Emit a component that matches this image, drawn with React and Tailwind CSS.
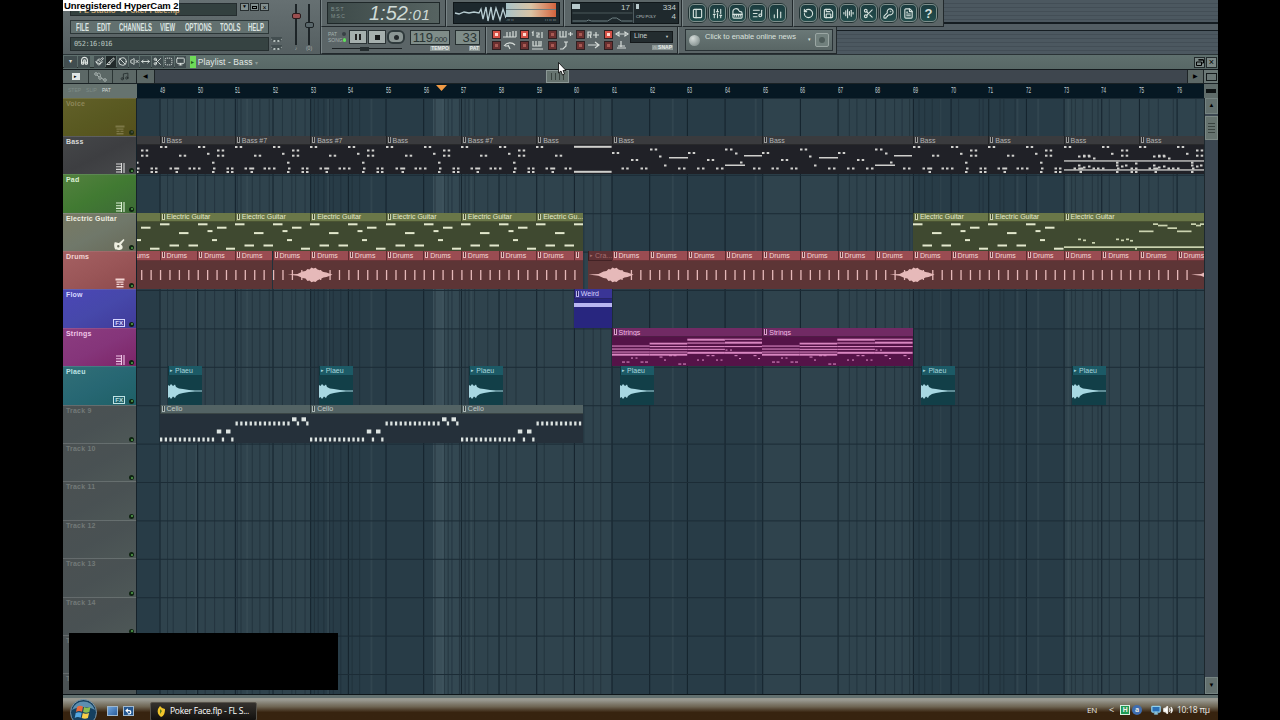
import {
    RotateCcw, Save, AudioLines, Scissors, KeyRound, FileText, SlidersVertical,
    Piano, ListMusic, ChartNoAxesColumn, PanelLeft, Paintbrush, Magnet, Ban,
    VolumeX, MoveHorizontal, Slice, SquareDashed, Monitor, Volume2, Music, Undo2,
} from 'lucide-react';

const BAR = 37.67;
const FIRST = 22.5; // x of bar 49 inside the lanes
const at = (bar) => FIRST + (bar - 49) * BAR;

// Text squeezed horizontally, for the narrow LCD-like captions
const Narrow = ({ w, className = '', children }) => (
    <span className={`block shrink-0 whitespace-nowrap ${className}`} style={{ width: w }}>
        <span className="inline-block origin-left scale-x-[0.54]">{children}</span>
    </span>
);

/* ---------- note data: [x, y, width] inside a clip body ---------- */

const BASS_A = [
    [0, 0.5], [4.7, 0.5], [19, 9.2], [23.7, 9.2], [9.5, 22], [14.2, 22, 5], [15.5, 25.5],
    [28.5, 22], [33, 22], [38, 22],
];
const BASS = [
    ...BASS_A, [38, 0.5], [42.7, 0.5], [57, 4], [61.7, 4], [47, 7.3], [57, 9.2], [61.7, 9.2],
    [52, 16.2], [53, 22], [52, 25.5], [66.5, 22], [71, 22], [66.5, 25.5], [71, 25.5],
];
const BASS_END = [...BASS_A.slice(0, -1), [38, 0.3, 37.6], [38, 25.3, 37.6]];
const BASS_LONG = [
    [0, 6.5], [4.7, 6.5], [19, 13.5], [23.7, 13.5], [9.5, 22], [14.2, 22], [28.5, 22], [33, 22],
    [38, 3], [42.7, 3], [47, 10], [57, 11.5, 19, 1.5], [52, 19], [66, 22], [71, 22],
    [76, 6.5], [80.7, 6.5], [95, 13.5], [99.7, 13.5], [85, 22], [90, 22], [104, 22], [109, 22],
    [113, 3], [118, 3], [123, 7], [132, 9.5, 18, 1.5], [128, 16], [113, 19, 20, 1.5], [141, 22], [146, 22],
];
const BASS_BUSY = [
    ...BASS, [0, 14.8, 75.4, 1.3], [0, 23.8, 75.4, 1.3], [14, 10], [19, 10], [24, 10], [29, 12],
    [14, 19], [19, 21], [24, 20], [52, 19], [57, 20], [61, 19], [71, 17],
];

const GUITAR = [
    [0, 0.8, 9.5], [38, 0.8, 9.5], [57, 4.2, 9.5], [47.5, 7.6, 5], [19, 9.6, 9.5], [52, 16.6, 5],
    [9.5, 22, 9.5], [28.5, 22, 9.5], [66, 25.2, 9.5],
];
const GUITAR_END = [
    [0, 23.8, 141], [14, 16, 3], [19, 17, 3], [28, 19.5, 3], [52, 16, 3], [57, 17, 3], [62, 16, 3],
    [66, 17.4, 3], [71, 25.5, 2], [75, 8, 14.5], [89, 0.8, 5], [94, 2.2, 9.5], [103.5, 4.8, 9.5],
    [113, 8, 14.5], [127, 0.8, 5], [132, 2.2, 5], [136, 0.8, 5],
];

const steps = (from, count) => Array.from({ length: count }, (_, i) => from + i * 4.71);
const CELLO = [
    ...steps(0, 12).map((x) => [x, 23, 2.3]),
    ...steps(75.5, 12).map((x) => [x, 7, 2.3]),
    [56.8, 15, 4.5], [66, 15, 4.5], [61.8, 23, 2.3], [71.2, 23, 2.3],
    [132, 2.8, 4.5], [141.5, 2.8, 4.5], [136.8, 7, 2.3], [146.2, 7, 2.3],
];

const STRINGS = [
    [0, 8, 37.6], [0, 11, 37.6], [0, 14, 37.6], [0, 16.2, 37.6, 2],
    [37.6, 5.2, 37.6, 1.8], [37.6, 8.5, 37.6], [37.6, 11.3, 37.6], [37.6, 14, 37.6], [37.6, 16.2, 37.6, 2],
    [75.3, 1.2, 37.6, 2], [75.3, 5, 37.6], [75.3, 8.5, 37.6], [75.3, 11.3, 37.6], [75.3, 14.3, 37.6, 2],
    [113, 1.2, 37.6], [113, 4.2, 37.6, 2], [113, 8.5, 37.6], [113, 14.3, 37.6, 2],
    [10, 24, 3], [14.5, 24, 3], [19, 20, 2], [23.5, 20, 2], [28.5, 24, 3], [33, 24, 3],
    [47.5, 19, 3], [52, 22, 2], [57, 17.6, 3], [61.5, 17.6, 3], [66.3, 26, 3], [71, 26, 3],
    [85, 22, 2], [90, 22, 2], [94.5, 17.6, 3], [99.5, 17.6, 3], [104, 22, 2], [108.5, 22, 2],
    [113.5, 12, 2], [118, 12, 2], [122.5, 17.6, 3], [127, 20.5, 2], [141.5, 17.6, 3], [146, 20.5, 2],
];

const Notes = ({ list, h = 2, className = 'fill-[#d0d0cd]' }) => (
    <svg className={`block h-full w-full ${className}`}>
        {list.map(([x, y, w = 2.5, nh = h], i) => (
            <rect key={i} x={x} y={y + 0.5} width={w} height={nh} />
        ))}
    </svg>
);

/* ---------- clips ---------- */

const STYLES = {
    bass: { head: 'bg-[#3a3b3e] text-[#b4b4b2]', body: 'bg-[#202127]' },
    guitar: { head: 'bg-[#6a7748] text-[#e6ebcb]', body: 'bg-[#3f4930]' },
    drums: { head: 'bg-[#9a4c52] text-[#f4d6d5]', body: 'bg-[#5d3536]' },
    crash: { head: 'bg-[#5f3135] text-[#a56f70]', body: 'bg-[#5d3536]' },
    weird: { head: 'bg-[#3a3596] text-[#d8d4ff]', body: 'bg-[#28267f]' },
    strings: { head: 'bg-[#712a64] text-[#f3bde4]', body: 'bg-[#551348]' },
    plaeu: { head: 'bg-[#1c5a66] text-[#a8d6dc]', body: 'bg-[#123f48]' },
    cello: { head: 'bg-[#536364] text-[#c0cac7]', body: 'bg-[#25303a]' },
};

const Clip = ({ kind, from, width, name, audio, children }) => {
    const s = STYLES[kind];
    return (
        <div className="absolute top-0 bottom-0 flex flex-col overflow-hidden" style={{ left: from, width }}>
            <div className={`flex h-[9.5px] shrink-0 items-center gap-[2px] overflow-hidden border-b border-l border-black/40 border-b-black/30 pl-px text-[7px] leading-[9px] ${s.head}`}>
                {audio ? (
                    <span className="text-[5px]">▸</span>
                ) : (
                    <span className="h-[6px] w-[3px] shrink-0 border border-t-0 border-current bg-black/50 opacity-80" />
                )}
                <span className="whitespace-nowrap">{name}</span>
            </div>
            <div className={`min-h-0 flex-1 ${s.body}`}>{children}</div>
        </div>
    );
};

const Lane = ({ children }) => <div className="relative h-full min-w-0 flex-1 overflow-hidden">{children}</div>;

const BASS_CLIPS = [
    [47, 2, '', BASS], [49, 2, 'Bass', BASS], [51, 2, 'Bass #7', BASS], [53, 2, 'Bass #7', BASS],
    [55, 2, 'Bass', BASS], [57, 2, 'Bass #7', BASS], [59, 2, 'Bass', BASS_END], [61, 4, 'Bass', BASS_LONG],
    [65, 4, 'Bass', BASS_LONG], [69, 2, 'Bass', BASS], [71, 2, 'Bass', BASS], [73, 2, 'Bass', BASS_BUSY],
    [75, 2, 'Bass', BASS_BUSY],
];

const BassLane = () => (
    <Lane>
        {BASS_CLIPS.map(([b, bars, name, list]) => (
            <Clip key={b} kind="bass" from={at(b)} width={BAR * bars} name={name}><Notes list={list} /></Clip>
        ))}
    </Lane>
);

const GuitarLane = () => (
    <Lane>
        {[47, 49, 51, 53, 55, 57, 59, 69, 71].map((b) => (
            <Clip key={b} kind="guitar" from={at(b)} width={b === 59 ? 47 : BAR * 2} name={b === 47 ? '' : b === 59 ? 'Electric Gu...' : 'Electric Guitar'}>
                <Notes list={GUITAR} className="fill-[#e3e8cd]" />
            </Clip>
        ))}
        <Clip kind="guitar" from={at(73)} width={BAR * 4} name="Electric Guitar">
            <Notes list={GUITAR_END} h={1.7} className="fill-[#cbd3b0]" />
        </Clip>
    </Lane>
);

const Swell = ({ x }) => (
    <path
        transform={`translate(${x} 0)`}
        d="M-25 23.4 L-15 23 L-10 20.5 L-7 20 L-5 18 L-3 18.5 L-1 16.5 L1 17.5 L3 16.8 L5 18.5 L8 19.5 L11 21 L14 21.5 L18 23 L20 23.4 L18 24.6 L14 26 L11 26.6 L8 28 L5 29.3 L3 31 L1 30.4 L-1 31.2 L-3 29.5 L-5 30 L-7 27.6 L-10 27 L-15 24.8 Z"
    />
);

const DrumsLane = () => {
    const ticks = Array.from({ length: 114 }, (_, i) => at(48) + 1 + i * (BAR / 4));
    return (
        <Lane>
            {Array.from({ length: 29 }, (_, i) => 48 + i).map((b) => (
                <Clip key={b} kind="drums" from={at(b)} width={b === 60 ? 9 : BAR} name={b === 60 ? '' : 'Drums'} />
            ))}
            <Clip kind="crash" from={451} width={23.5} name="Cra..." audio />
            <svg className="absolute inset-0 h-full w-full fill-[#e6b9b9]">
                {ticks.filter((x) => x < 446 || x > 474).map((x) => (
                    <rect key={x} x={x - 0.6} y="19" width="1.3" height="10" />
                ))}
                <Swell x={175.5} />
                <Swell x={476.5} />
                <Swell x={777.5} />
                <Swell x={1079} />
            </svg>
        </Lane>
    );
};

const FlowLane = () => (
    <Lane>
        <Clip kind="weird" from={at(60)} width={BAR} name="Weird">
            <div className="pt-[4px]"><div className="h-[4px] bg-[#b9b6f2]" /></div>
        </Clip>
    </Lane>
);

const StringsLane = () => (
    <Lane>
        {[61, 65].map((b) => (
            <Clip key={b} kind="strings" from={at(b)} width={BAR * 4} name="Strings">
                <Notes list={STRINGS} h={1.1} className="fill-[#d886c0]" />
            </Clip>
        ))}
    </Lane>
);

const PlaeuLane = () => (
    <Lane>
        {[49, 53, 57, 61, 69, 73].map((b) => (
            <Clip key={b} kind="plaeu" from={at(b) + 8.5} width={34} name="Plaeu" audio>
                <svg className="block h-full w-full fill-[#a8d8e2]">
                    <path d="M0 9 L1.5 10 L3 8 L5 10 L7 8.5 L8 11 L11 12.5 L15 13 L21 14 L27 14.4 L34 14.6 L34 15.4 L27 15.6 L21 16 L15 17 L11 18 L8 20 L7 22 L5 20.5 L3 23 L1.5 21 L0 22 Z" />
                </svg>
            </Clip>
        ))}
    </Lane>
);

const CelloLane = () => (
    <Lane>
        {[49, 53, 57].map((b) => (
            <Clip key={b} kind="cello" from={at(b)} width={b === 57 ? 122 : BAR * 4} name="Cello">
                <Notes list={CELLO} h={4} className="fill-[#dde4e2]" />
            </Clip>
        ))}
    </Lane>
);

/* ---------- tracks ---------- */

const KeysIcon = () => (
    <svg className="h-[10px] w-[10px] fill-none stroke-current" viewBox="0 0 10 10">
        <path d="M1 1h5M1 3.7h5M1 6.4h5M1 9h5M6.5 0v10M9 0v10" strokeWidth="1.1" />
    </svg>
);
const GuitarIcon = () => (
    <svg className="h-[11px] w-[11px] fill-current" viewBox="0 0 11 11">
        <path fillRule="evenodd" d="M0.500 3.500 C2 2.500 4 4 5 4 L9.500 0 L10.500 1 L7 5.500 C9 7 9 8.500 8 10 C6 11.500 2 11 1 10 C0 8 0 6 0.500 3.500Z M4.300 6a1.200 1.200 0 100 2.400 1.200 1.200 0 000-2.400Z" />
    </svg>
);
const DrumIcon = () => (
    <svg className="h-[10px] w-[10px] fill-current" viewBox="0 0 10 10">
        <path d="M0.500 0.500h9v2h-9zM1.500 3.500h7v1.200h-7zM1.500 5.700h3v1.200h-3zM5.500 5.700h3v1.200h-3zM1.500 8h7v1.500h-7z" />
    </svg>
);
const FxIcon = () => (
    <span className="border border-current px-px text-[6px] leading-[6px] font-bold">FX</span>
);

const TRACKS = [
    { name: 'Voice', bg: 'bg-linear-to-br from-[#626029] via-[#595921] to-[#55501c]', text: 'text-[#8d8759]', icon: <DrumIcon />, off: true },
    { name: 'Bass', bg: 'bg-linear-to-br from-[#454749] via-[#3d3e41] to-[#47494b]', text: 'text-[#d8d8d8]', icon: <KeysIcon />, lane: <BassLane /> },
    { name: 'Pad', bg: 'bg-linear-to-br from-[#53813f] via-[#417a32] to-[#3d6a36]', text: 'text-[#dcf0d4]', icon: <KeysIcon /> },
    { name: 'Electric Guitar', bg: 'bg-linear-to-br from-[#797a63] via-[#70786a] to-[#686a58]', text: 'text-[#eeeee0]', icon: <GuitarIcon />, lane: <GuitarLane /> },
    { name: 'Drums', bg: 'bg-linear-to-br from-[#a56062] via-[#9a5658] to-[#8d4a4c]', text: 'text-[#f3d5d4]', icon: <DrumIcon />, lane: <DrumsLane /> },
    { name: 'Flow', bg: 'bg-linear-to-br from-[#4b46b6] via-[#4648aa] to-[#403b99]', text: 'text-[#d6d6ff]', icon: <FxIcon />, lane: <FlowLane /> },
    { name: 'Strings', bg: 'bg-linear-to-br from-[#8c3c80] via-[#85357a] to-[#7c2467]', text: 'text-[#f1c6e8]', icon: <KeysIcon />, lane: <StringsLane /> },
    { name: 'Plaeu', bg: 'bg-linear-to-br from-[#316f77] via-[#276773] to-[#1e6066]', text: 'text-[#bde2e4]', icon: <FxIcon />, lane: <PlaeuLane /> },
    { name: 'Track 9', lane: <CelloLane /> },
    ...[10, 11, 12, 13, 14, 15, 16].map((n) => ({ name: `Track ${n}` })),
];

const Track = ({ name, bg, text, icon, lane, off }) => (
    <div className="flex h-[38.4px] shrink-0">
        <div className={`flex w-[74px] shrink-0 flex-col justify-between border-t border-r border-t-white/15 border-r-[#16222a] pt-px pr-[2px] pb-px pl-[3px] ${bg || 'bg-linear-to-br from-[#4b5152] via-[#495153] to-[#4e5857]'} ${text || 'text-[#727978]'}`}>
            <span className="text-[7px] leading-[8px] font-bold tracking-[0.2px] whitespace-nowrap">{name}</span>
            <div className={`flex items-end justify-end gap-[4px] ${off ? 'opacity-70' : ''}`}>
                {icon}
                <span className="flex h-[5px] w-[5px] items-center justify-center rounded-full bg-[#0e2411]">
                    <span className={`h-[2px] w-[2px] rounded-full ${off ? 'bg-[#3c4b5c]' : 'bg-[#56a24c]'}`} />
                </span>
            </div>
        </div>
        {lane}
    </div>
);

// Fine lines that sit between the bars
const FINE = [
    49.2, 49.35, 49.7, 50.2, 50.45, 50.7, 51.05, 51.15, 51.45, 51.65, 51.9, 52.25, 52.5, 52.6, 52.85, 53.1, 53.2,
    53.35, 53.5, 53.6, 53.8, 54.1, 54.3, 56.3, 56.55, 56.65, 56.75, 56.95, 57.1, 57.2, 57.35, 57.7, 58.2, 58.45,
    59.2, 59.7, 60.25, 60.5, 60.7, 67.3, 67.5, 67.75, 68.25, 68.5, 68.7, 68.9, 69.15, 69.3, 69.5, 69.7, 70.2,
    70.75, 70.85, 71.3, 71.4, 71.7, 73.2, 73.3, 73.5, 73.75, 73.9, 74.2, 74.5, 75.25, 75.5, 75.9, 76.5,
];
const GLOW = [49.95, 51.3, 53.45, 54.6, 56.5, 57.25, 62.6, 64.8, 69.7, 71.75, 72.3, 73.1];

const Grid = () => (
    <svg className="absolute top-0 right-0 h-full w-[1067px]">
        <rect width="1067" height="597" className="fill-[#283c47]" />
        {[49, 57, 65, 73].map((b) => (
            <rect key={b} x={at(b)} width={BAR * 4} height="597" className="fill-[#2f434d]" />
        ))}
        <rect x="296" width="28" height="597" className="fill-[#334852]" />
        <rect x="296" width="12" height="597" className="fill-[#3a4f59]" />
        {FINE.map((b) => <rect key={b} x={at(b)} width="1" height="597" className="fill-[#1d2c36]/60" />)}
        {GLOW.map((b) => <rect key={b} x={at(b)} width="2" height="597" className="fill-[#4d6068]/25" />)}
        {Array.from({ length: 28 }, (_, i) => 49 + i).map((b) => (
            <rect key={b} x={at(b)} width="1" height="597" className="fill-[#14222c]" />
        ))}
        {Array.from({ length: 16 }, (_, i) => i * 38.4).map((y) => (
            <rect key={y} y={y} width="1067" height="1" className="fill-[#1c2c36]" />
        ))}
    </svg>
);

/* ---------- top toolbar ---------- */

const RoundButton = ({ children }) => (
    <span className="flex h-[20px] w-[19px] items-center justify-center rounded-[6px] border-2 border-[#7f908d] bg-linear-to-b from-[#1c3c3f] to-[#234d4c] text-[#d6e2de] outline outline-[#223334] outline-offset-[-1px]">
        {children}
    </span>
);

const ICON = { size: 11, strokeWidth: 2.4 };
const TOOLS_A = [PanelLeft, SlidersVertical, Piano, ListMusic, ChartNoAxesColumn];
const TOOLS_B = [RotateCcw, Save, AudioLines, Scissors, KeyRound, FileText];

const Led = ({ on }) => (
    <span className={`flex h-[9px] w-[9px] items-center justify-center border border-[#2e2022] ${on ? 'bg-[#d55147]' : 'bg-[#6c3030]'}`}>
        <span className={`h-[3px] w-[3px] ${on ? 'bg-[#ffd9cf]' : 'bg-[#a85a54]'}`} />
    </span>
);

const Glyph = ({ d }) => (
    <svg className="h-[9px] w-[14px] fill-none stroke-[#d6dcd9]" viewBox="0 0 14 9"><path d={d} strokeWidth="1.2" /></svg>
);

const SWITCHES = [
    [true, 'M0 7h13M4 2v5M7 2v5M10 1v6M13 1v6'], [true, 'M1 3l1-1v4M5 3h3v2H6v2h3M11 2v6'],
    [false, 'M1 1v6h6V1M4 1v6M9 4h5M11.5 2v4'], [false, 'M1 8V2h3v3H1M4 8L3 5M6 5h6M9 2v6'], [true, 'M1 4l3-2v4zM13 4l-3-2v4zM5 4h4'],
    [false, 'M1 5c3-4 8-4 11-1M5 4l2 4M2 5h4'], [false, 'M2 0v5h8V0M5 0v5M8 0v5M1 8h11'],
    [false, 'M1 8h3l3-3V1M5 1h4'], [false, 'M1 4h10M8 1l4 3-4 3'], [false, 'M6 0v6M2 7h9M3 5h7'],
];

const Caption = ({ children }) => <span className="self-end bg-[#8b9694] px-px text-[5px] leading-[5px] font-bold text-[#e5e9e7]">{children}</span>;

const MENU = [['FILE', 21], ['EDIT', 22], ['CHANNELS', 41], ['VIEW', 25], ['OPTIONS', 35], ['TOOLS', 28], ['HELP', 17]];

const WIN_BUTTON = 'flex h-[8px] w-[9px] items-center justify-center border border-[#262d2f] bg-[#839090] text-black';

const MainPanel = () => (
    <div className="flex w-[258px] shrink-0 border-r border-[#272f32] bg-linear-to-b from-[#667072] to-[#555f61]">
        <div className="flex w-[208px] flex-col pl-[7px]">
            <div className="flex h-[19px] items-start gap-[3px] pt-[3px]">
                <div className="flex h-[13px] w-[167px] items-end overflow-hidden border border-[#252d2f] bg-[#33403f] pl-[8px] text-[8px] leading-[9px] font-bold whitespace-nowrap text-[#c6a574]">
                    FL Studio&nbsp;&nbsp;- Poker Face.flp
                </div>
                <div className="flex gap-px">
                    <span className={`${WIN_BUTTON} text-[5px]`}>▼</span>
                    <span className={WIN_BUTTON}><i className="h-[3px] w-[5px] border border-black" /></span>
                    <span className={`${WIN_BUTTON} text-[7px] leading-none`}>×</span>
                </div>
            </div>
            <div className="mt-[1px] flex h-[14px] w-[199px] shrink-0 items-center border border-[#2d3738] bg-[#62706f] pl-[5px] text-[11px] leading-[12px] font-bold text-[#dbe4e1]">
                {MENU.map(([label, w]) => <Narrow key={label} w={w}>{label}</Narrow>)}
            </div>
            <div className="mt-[3px] flex h-[14px] w-[199px] shrink-0 items-center border border-[#262f30] bg-[#364342] pl-[3px] font-['DejaVu_Sans_Mono','Liberation_Mono',monospace] text-[7px] tracking-[-0.4px] text-[#b6c3bf]">
                052:16:016
            </div>
        </div>
        <div className="flex w-[14px] flex-col justify-end gap-[3px] pb-[4px]">
            <span className="h-[5px] w-[11px] rounded-b border-b-2 border-dotted border-[#b8c2bf] bg-[#434e50]" />
            <span className="h-[5px] w-[11px] rounded-b border-b-2 border-dotted border-[#b8c2bf] bg-[#434e50]" />
        </div>
        <div className="flex flex-1 justify-center gap-[3px] pt-[4px]">
            <div className="flex w-[10px] flex-col items-center">
                <span className="h-[9px] w-[2px] bg-[#1d2427]" />
                <span className="h-[6px] w-[9px] rounded-xs border border-[#2a1a1c] bg-[#9c4f50]" />
                <span className="h-[26px] w-[2px] bg-[#1d2427]" />
                <span className="text-[5px] leading-[6px] text-[#aab3b0]">♪</span>
            </div>
            <div className="flex w-[10px] flex-col items-center">
                <span className="h-[18px] w-[2px] bg-[#1d2427]" />
                <span className="h-[6px] w-[9px] rounded-xs border border-[#1c2224] bg-[#59666a]" />
                <span className="h-[17px] w-[2px] bg-[#1d2427]" />
                <span className="text-[5px] leading-[6px] text-[#aab3b0]">(0)</span>
            </div>
        </div>
    </div>
);

const PANEL = 'flex items-center border-r border-b border-r-[#22292c] border-b-[#22292c] border-l border-l-[#7a8587] bg-[#5b6567]';
const STRIPES = 'flex-1 bg-[repeating-linear-gradient(to_bottom,#4c5860_0px,#4c5860_3px,#434e56_3px,#434e56_4px)]';

const Toolbar = () => (
    <div className="flex h-[55px] shrink-0 border-b border-[#2a3336] bg-[#535e64]">
        <MainPanel />
        <div className="flex min-w-0 flex-1 flex-col">
            <div className="flex h-[27px]">
                <div className={`${PANEL} w-[125px] pl-[5px]`}>
                    <div className="flex h-[22px] w-[113px] items-center border border-[#1f2829] bg-linear-to-r from-[#3d4a49] to-[#566361]">
                        <span className="ml-[3px] w-[38px] text-[5px] leading-[7px] text-[#849390]">B:S:T<br />M:S:C</span>
                        <span className="flex items-baseline text-[#cfdad6] italic">
                            <span className="text-[20px] leading-none">1:52</span>
                            <span className="text-[15px] leading-none tracking-[0.5px]">:01</span>
                        </span>
                    </div>
                </div>
                <div className={`${PANEL} w-[118px] pl-[6px]`}>
                    <div className="flex h-[22px] w-[107px] items-start border border-[#0f1619] bg-[#1d282d]">
                        <svg className="h-[20px] w-[52px] shrink-0 fill-none stroke-[#b8cdd2]" viewBox="0 0 52 20">
                            <path d="M1 10l4 1 5-2 5 1 5-1 5 1 2-4 2 10 3-12 2 14 3-14 2 13 3-12 4 12 3-11 3 9" strokeWidth="1.3" />
                        </svg>
                        <div className="flex w-[50px] flex-col">
                            <span className="h-[7px] border-b border-[#6d7d80] bg-linear-to-r from-[#a8c3c8] via-[#d9c3a4] to-[#d3623c]" />
                            <span className="h-[7px] bg-linear-to-r from-[#a8c3c8] via-[#d9c3a4] to-[#d3623c]" />
                            <span className="flex justify-between text-[4px] leading-[5px] text-[#8fa0a2]"><span>-∞ ıı</span><span>ı ı ıı ııı</span></span>
                        </div>
                    </div>
                </div>
                <div className={`${PANEL} w-[118px] pl-[6px]`}>
                    <div className="flex h-[22px] w-[108px] border border-[#10171a] bg-[#1f292d] text-[8px] leading-[9px] text-[#c6d0cd]">
                        <div className="flex w-[62px] flex-col border-r border-[#4f5c60]">
                            <div className="flex items-start justify-between pr-[3px]"><i className="mt-[1px] h-[5px] w-[8px] bg-[#b8c9cc]" /><span>17</span></div>
                            <svg className="h-[11px] w-full fill-none stroke-[#6f8184]" viewBox="0 0 60 11"><path d="M0 9h14l2-1 3 1 16 0 5-3 4 0 5 3h11" /><path d="M0 1h60" className="stroke-[#4b585b]" /></svg>
                        </div>
                        <div className="flex flex-1 flex-col px-[2px]">
                            <div className="flex items-start justify-between"><i className="mt-[1px] h-[5px] w-[3px] bg-[#b8c9cc]" /><span>334</span></div>
                            <div className="flex items-end justify-between"><span className="text-[4px]">CPU POLY</span><span>4</span></div>
                        </div>
                    </div>
                </div>
                <div className={`${PANEL} w-[111px] justify-center gap-px`}>
                    {TOOLS_A.map((I, i) => <RoundButton key={i}><I {...ICON} /></RoundButton>)}
                </div>
                <div className={`${PANEL} w-[151px] justify-center gap-px`}>
                    {TOOLS_B.map((I, i) => <RoundButton key={i}><I {...ICON} /></RoundButton>)}
                    <RoundButton><span className="text-[13px] leading-none font-bold">?</span></RoundButton>
                </div>
                <div className={`${STRIPES} mb-[3px] border-b-2 border-[#151d22]`} />
            </div>
            <div className="flex h-[27px]">
                <div className={`${PANEL} w-[165px] gap-[5px] pl-[6px]`}>
                    <div className="flex flex-col gap-[2px]">
                        <div className="flex h-[15px] items-center">
                            <div className="flex w-[18px] flex-col text-[5px] leading-[6px] text-[#a7b2af]">
                                <span className="flex items-center justify-between">PAT<i className="h-[4px] w-[4px] rounded-full bg-[#384045]" /></span>
                                <span className="flex items-center justify-between">SONG<i className="h-[4px] w-[4px] rounded-full bg-[#5fe05b]" /></span>
                            </div>
                            <div className="ml-[3px] flex gap-px">
                                <span className="flex h-[14px] w-[18px] items-center justify-center gap-[2px] border border-[#2b3335] bg-[#a5afad]"><i className="h-[6px] w-[2px] bg-[#222]" /><i className="h-[6px] w-[2px] bg-[#222]" /></span>
                                <span className="flex h-[14px] w-[18px] items-center justify-center border border-[#2b3335] bg-[#a5afad]"><i className="h-[5px] w-[5px] bg-[#16191a]" /></span>
                                <span className="flex h-[14px] w-[18px] items-center justify-center rounded-md border-2 border-[#2f3a3c] bg-[#8b9694]"><i className="h-[5px] w-[5px] rounded-full bg-[#23292b]" /></span>
                            </div>
                        </div>
                        <div className="ml-[4px] flex w-[70px] items-center">
                            <i className="h-px w-[28px] bg-[#1c2224]" /><i className="h-[4px] w-[9px] bg-[#262e30]" /><i className="h-px flex-1 bg-[#1c2224]" />
                        </div>
                    </div>
                    <div className="flex flex-col gap-[1px]">
                        <div className="flex h-[15px] w-[40px] items-baseline justify-end border border-[#262f30] bg-[#7f8d89] pr-[2px] leading-[13px] text-[#2a3534]">
                            <span className="text-[13px] tracking-[-0.3px]">119</span><span className="text-[8px] tracking-[-0.3px]">.000</span>
                        </div>
                        <Caption>TEMPO</Caption>
                    </div>
                    <div className="flex flex-col gap-[1px]">
                        <div className="flex h-[15px] w-[25px] items-center justify-end border border-[#262f30] bg-[#7f8d89] pr-[2px] text-[13px] leading-none text-[#2a3534]">33</div>
                        <Caption>PAT</Caption>
                    </div>
                </div>
                <div className={`${PANEL} w-[192px] gap-px pl-[5px]`}>
                    <div className="grid grid-cols-5 gap-x-[3px] gap-y-[2px]">
                        {SWITCHES.map(([on, d], i) => (
                            <span key={i} className="flex items-center gap-[2px]"><Led on={on} /><Glyph d={d} /></span>
                        ))}
                    </div>
                    <div className="flex flex-col gap-[2px]">
                        <div className="flex h-[12px] w-[43px] items-center justify-between border border-[#14191b] bg-[#232c2f] px-[3px] text-[7px] text-[#c8d0ce]">Line<span className="text-[4px]">▼</span></div>
                        <Caption>∩ SNAP</Caption>
                    </div>
                </div>
                <div className={`${PANEL} w-[159px] pl-[6px]`}>
                    <div className="flex h-[22px] w-[148px] items-center border border-[#2a3336] bg-linear-to-b from-[#6a7877] to-[#596665] px-[3px] text-[7.5px] text-[#dbe2df]">
                        <span className="mr-[5px] h-[11px] w-[11px] rounded-full bg-radial-[at_35%_30%] from-[#d5dcda] to-[#6f7d7b]" />
                        <span className="mb-[6px] flex-1 whitespace-nowrap">Click to enable online news</span>
                        <span className="mr-[4px] text-[5px]">▾</span>
                        <span className="flex h-[14px] w-[14px] items-center justify-center rounded-xs border border-[#9aa6a3] bg-[#71807d]"><i className="h-[6px] w-[6px] rounded-full bg-[#4e5c5a]" /></span>
                    </div>
                </div>
                <div className={`${STRIPES} mt-[3px] border-t border-[#151d22]`} />
            </div>
        </div>
    </div>
);

/* ---------- playlist window ---------- */

const TITLE_ICONS = [Paintbrush, Slice, Ban, VolumeX, MoveHorizontal, Scissors, SquareDashed, Monitor];

const PlaylistTitle = () => (
    <div className="flex h-[14px] shrink-0 items-center bg-linear-to-b from-[#5f706e] to-[#586866]">
        <div className="flex h-[12px] items-center gap-px border-b border-[#29312f] pl-px text-[#e0e6e3]">
            <span className="flex h-[12px] w-[13px] items-center justify-center bg-[#414d4f] text-[6px]">▾</span>
            <span className="flex h-[12px] w-[12px] items-center justify-center bg-[#414d4f]"><Magnet size={9} strokeWidth={3} className="-rotate-45" /></span>
            <span className="w-[2px]" />
            {TITLE_ICONS.map((I, i) => (
                <span key={i} className={`flex h-[12px] w-[10.6px] items-center justify-center ${i === 1 ? 'bg-[#222a2b]' : 'bg-[#414d4f]'}`}><I size={9} strokeWidth={2.4} /></span>
            ))}
        </div>
        <span className="ml-[4px] flex h-[12px] w-[6px] items-center justify-center bg-[#6fdb58] text-[6px] text-[#1d5a18]">▸</span>
        <span className="ml-[2px] text-[8.5px] tracking-[0.1px] text-[#e2e8e5]">Playlist - Bass <span className="text-[6px] text-[#8d9a97]">▾</span></span>
        <span className="mr-[1px] ml-auto flex h-[11px] gap-px">
            <span className="flex w-[11px] items-center justify-center border border-[#222a2b] bg-[#7b8886]">
                <svg className="h-[7px] w-[8px] fill-none stroke-black" viewBox="0 0 8 7"><path d="M2.500 1h5v3h-1.500M.500 3h5v3.500h-5zM2.500 .7h5" /></svg>
            </span>
            <span className="flex w-[11px] items-center justify-center border border-[#222a2b] bg-[#7b8886] text-[9px] leading-none text-black">×</span>
        </span>
    </div>
);

const ScrollRow = () => (
    <div className="flex h-[15px] shrink-0 border-t border-b border-t-[#141a1d] border-b-[#1a2225] bg-[#3e464e]">
        <div className="flex w-[74px] shrink-0 border-r border-[#1d2426] bg-[#5c6866] text-[#d0d8d5]">
            <span className="flex w-[26px] items-center justify-center border-r border-[#2b3534]"><i className="flex h-[7px] w-[8px] items-center justify-center bg-[#e2e6e4] text-[5px] text-black not-italic">▸</i></span>
            <span className="flex w-[24px] items-center justify-center border-r border-[#2b3534]">
                <svg className="h-[10px] w-[13px] fill-none stroke-[#a9b3b0]" viewBox="0 0 13 10"><circle cx="2" cy="2" r="1.3" /><circle cx="6" cy="6" r="1.300" /><circle cx="11" cy="8" r="1.3" /><path d="M3 3l2 2M7.300 6.300L10 7.500M3.500 1.500c2-1 3 0 3 3" /></svg>
            </span>
            <span className="flex flex-1 items-center justify-center text-[#202829]"><Music size={9} /></span>
        </div>
        <span className="flex w-[18px] shrink-0 items-center justify-center border-r border-[#1d2426] bg-[#5c6866] text-[6px] text-black">◀</span>
        <div className="flex flex-1 pl-[391px]">
            <span className="flex w-[23px] items-center justify-center gap-[3px] border border-[#8b9896] bg-[#66736f]">
                {[0, 1, 2, 3].map((i) => <i key={i} className="h-[7px] w-px bg-[#39433f]" />)}
            </span>
        </div>
        <span className="flex w-[17px] items-center justify-center border-x border-[#1d2426] bg-[#5c6866] text-[6px] text-black">▶</span>
        <span className="flex w-[14px] items-center justify-center bg-[#6b7876]"><i className="h-[8px] w-[11px] border border-[#141a1b]" /></span>
    </div>
);

const Ruler = () => (
    <div className="flex h-[13.5px] shrink-0">
        <div className="flex w-[74px] shrink-0 items-center gap-[5px] bg-[#66736f] pl-[5px] text-[5px] text-[#7f8c88]">
            <span>STEP</span><span>SLIP</span><span className="text-[#d5dbd8]">PAT</span>
        </div>
        <div className="relative flex min-w-0 flex-1 items-center overflow-hidden bg-[#061823] pl-[23px] text-[8.5px] text-[#c3d0d4]">
            {Array.from({ length: 28 }, (_, i) => 49 + i).map((b) => <Narrow key={b} w={BAR}>{b}</Narrow>)}
            <svg className="absolute top-[1px] left-[299px] h-[6px] w-[11px] fill-[#f09a45]" viewBox="0 0 11 6"><path d="M0 0h11L5.5 6z" /></svg>
        </div>
        <span className="flex w-[14px] items-center justify-center bg-[#5f6c6a]"><i className="h-[4px] w-[10px] bg-[#0d1213]" /></span>
    </div>
);

const Playlist = () => (
    <div className="flex min-h-0 flex-1 flex-col">
        <PlaylistTitle />
        <ScrollRow />
        <Ruler />
        <div className="flex min-h-0 flex-1">
            <div className="relative min-w-0 flex-1 overflow-hidden">
                <Grid />
                <div className="relative flex flex-col">
                    {TRACKS.map((t) => <Track key={t.name} {...t} />)}
                </div>
            </div>
            <div className="flex w-[14px] shrink-0 flex-col border-l border-[#1d282e] bg-[#3b4650] text-[6px] text-black">
                <span className="flex h-[16px] items-center justify-center border border-[#8a9795]/50 bg-[#63706e]">▲</span>
                <span className="mt-[2px] flex h-[24px] flex-col items-center justify-center gap-[2px] border border-[#8a9795]/60 bg-[#66736f]">
                    {[0, 1, 2, 3].map((i) => <i key={i} className="h-px w-[7px] bg-[#39433f]" />)}
                </span>
                <span className="mt-auto flex h-[17px] items-center justify-center border border-[#8a9795]/50 bg-[#63706e]">▼</span>
            </div>
        </div>
        <div className="h-[4px] shrink-0 border-t border-[#0e161a] bg-[#62706f]" />
    </div>
);

/* ---------- taskbar ---------- */

const StartOrb = () => (
    <svg className="mt-px h-[27px] w-[27px] shrink-0" viewBox="0 0 27 27">
        <circle cx="13.5" cy="13.5" r="13" className="fill-[#16405f] stroke-[#7c97a8]" />
        <path d="M2 11a12 12 0 0123 0c-6-4-17-4-23 0z" className="fill-[#6fa3c4]/80" />
        <path d="M7 8c2-1.5 4-1.5 6-.3l-1 5c-2-1-4-1-6 .2z" className="fill-[#e9693a]" />
        <path d="M14 8c2 1 4 1 6.5 0l-1.2 5c-2 1-4 1-6.2 0z" className="fill-[#8cc04c]" />
        <path d="M5.7 14c2-1 4-1 6-.2l-1 5c-2-1-4-1-6 .2z" className="fill-[#56a8e0]" />
        <path d="M12.8 14c2 1 4 1 6.3 0l-1.2 5c-2 1-4 1-6.2 0z" className="fill-[#f7cf48]" />
    </svg>
);

const Taskbar = () => (
    <div className="flex h-[22px] shrink-0 items-start overflow-hidden bg-linear-to-b from-[#98988f] from-10% via-[#6d6452] via-40% to-[#37230f] to-65% pl-[7px] text-white">
        <StartOrb />
        <div className="mt-[8px] ml-[10px] flex gap-[5px]">
            <span className="h-[10px] w-[11px] border border-[#9fb8cf] bg-linear-to-br from-[#6fa4dc] to-[#2c5f9e]" />
            <span className="flex h-[10px] w-[11px] items-center justify-center border border-[#9fb8cf] bg-[#24568f]"><Undo2 size={7} strokeWidth={4} /></span>
        </div>
        <div className="mt-[4px] ml-[16px] flex h-[19px] w-[107px] items-center rounded-xs border border-[#57534b] bg-linear-to-b from-[#35322e] to-[#13110f] pl-[6px] font-['Open_Sans','Noto_Sans',sans-serif] text-[8.5px] tracking-[-0.25px] whitespace-nowrap">
            <svg className="mr-[5px] h-[11px] w-[8px]" viewBox="0 0 8 11"><path d="M3 0l2 2 3 1c0 4-1 7-4 8C1 9 0 6 1 3z" className="fill-[#f0c52c]" /><path d="M3 3l2 2-2 3z" className="fill-[#5a7a1e]" /></svg>
            Poker Face.flp - FL S...
        </div>
        <div className="mt-[6px] mr-[9px] ml-auto flex h-[12px] items-center font-['Open_Sans','Noto_Sans',sans-serif] text-[8.5px] tracking-[-0.25px] text-[#ecebe6]">
            <span className="w-[22px] text-[8px]">EN</span>
            <span className="w-[11px] text-[9px]">&lt;</span>
            <span className="flex h-[10px] w-[10px] items-center justify-center border border-[#d6f0df] bg-[#1d9a55] text-[7px] font-bold">H</span>
            <span className="ml-[2px] flex h-[10px] w-[10px] items-center justify-center rounded-full bg-[#3f6db0] text-[7px] font-bold">a</span>
            <span className="ml-[9px] flex text-[#8fd0ee]"><Monitor size={10} strokeWidth={3} className="fill-[#2a6fb5]" /></span>
            <span className="mr-[4px] ml-[2px] flex"><Volume2 size={10} strokeWidth={3} className="fill-white" /></span>
            <span className="w-[32px] whitespace-nowrap">10:18 πμ</span>
        </div>
    </div>
);

export default function App() {
    return (
        <div className="relative flex h-[720px] w-[1280px] overflow-hidden bg-black pl-[63px] font-['Liberation_Sans',Arial,sans-serif]">
            <div className="flex w-[1155px] flex-col">
                <Toolbar />
                <Playlist />
                <Taskbar />
            </div>

            {/* Recorder badge */}
            <div className="absolute top-0 left-[63px] h-[11px] w-[116px] bg-white pl-px text-[9.5px] leading-[11px] font-bold tracking-[-0.1px] whitespace-nowrap text-black">
                Unregistered HyperCam 2
            </div>
            <div className="absolute top-[633px] left-[69px] h-[57px] w-[269px] bg-black" />
            <svg className="absolute top-[62px] left-[558px] h-[14px] w-[9px]" viewBox="0 0 9 14">
                <path d="M.5.5v10.5l2.5-2 1.5 4 2-1-1.5-3.5h3z" className="fill-white stroke-black" strokeWidth=".8" />
            </svg>
        </div>
    );
}
